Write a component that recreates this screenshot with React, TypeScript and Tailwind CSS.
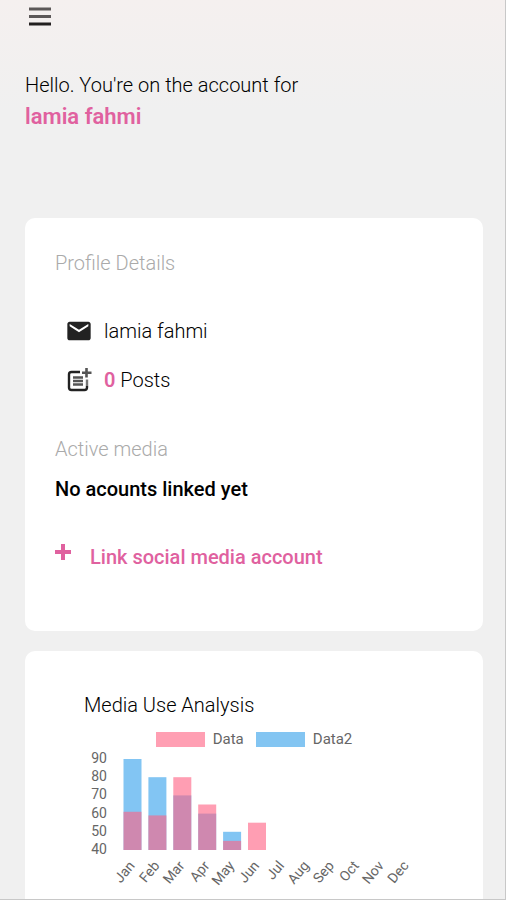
import { MdEmail } from "react-icons/md";

interface MonthPros {
    name: string;
    data: number;
    data2: number;
}

const months: MonthPros[] = [
    { name: "Jan", data: 61, data2: 90 },
    { name: "Feb", data: 59, data2: 80 },
    { name: "Mar", data: 80, data2: 70 },
    { name: "Apr", data: 65, data2: 60 },
    { name: "May", data: 45, data2: 50 },
    { name: "Jun", data: 55, data2: 40 },
    { name: "Jul", data: 40, data2: 40 },
    { name: "Aug", data: 40, data2: 40 },
    { name: "Sep", data: 40, data2: 40 },
    { name: "Oct", data: 40, data2: 40 },
    { name: "Nov", data: 40, data2: 40 },
    { name: "Dec", data: 40, data2: 40 },
];

const ticks = [90, 80, 70, 60, 50, 40];

// the value axis starts at 40
const barHeight = (value: number) => (value - 40) * 1.82;

function PostAddIcon() {
    return (
        <svg viewBox="0 0 26 26" className="w-[26px] h-[26px]" fill="none" aria-hidden="true">
            <path d="M14 5H5.5Q3 5 3 7.500V20.500Q3 23 5.500 23H18.500Q21 23 21 20.500V19" stroke="#222" strokeWidth="2.400" />
            <path d="M21 19V12.500" stroke="#777" strokeWidth="2.400" />
            <path d="M7 10.500H17M7 14H17M7 17.500H17" stroke="#555" strokeWidth="2.600" />
            <path d="M20.500 1V10.500M16 5.800H25.500" stroke="#555" strokeWidth="2.600" />
        </svg>
    );
}

function UsageChart() {
    return (
        <svg viewBox="0 0 340 150" className="block w-[340px] h-[150px]" role="img" aria-label="Media Use Analysis">
            {ticks.map((tick) => (
                <text key={tick} x="23" y={105 - barHeight(tick)} textAnchor="end" fontSize="14" fill="#666">{tick}</text>
            ))}
            {months.map((month, i) => (
                <g key={month.name} transform={`translate(${39.5 + i * 24.9} 0)`}>
                    <rect y={101 - barHeight(month.data2)} width="18" height={barHeight(month.data2)} fill="#36a2eb" fillOpacity="0.62" />
                    <rect y={101 - barHeight(month.data)} width="18" height={barHeight(month.data)} fill="#ff6384" fillOpacity="0.62" />
                    <text transform="translate(12 117) rotate(-50)" textAnchor="end" fontSize="14" fill="#666">{month.name}</text>
                </g>
            ))}
        </svg>
    );
}

export default function App() {
    return (
        <main className="h-screen overflow-hidden border-r border-b border-[#c8c8c8] bg-[#f0f0f0] bg-linear-to-b from-[#f5f0ef] to-[#f0f0f0] to-[110px] pl-[25px] pr-[22px] font-['Roboto',sans-serif] text-xl font-light text-black">
            <header className="h-[218px]">
                <button type="button" aria-label="Menu" className="block h-[32px] w-[30px]">
                    <svg viewBox="0 0 30 32" className="w-[30px] h-[32px]" strokeWidth="3" aria-hidden="true">
                        <path d="M4 9H26M4 16.500H26" stroke="#5c5858" />
                        <path d="M4 24H26" stroke="#221f1f" />
                    </svg>
                </button>
                <div className="pt-[37px] leading-[32px]">
                    <p>Hello. You're on the account for</p>
                    <p className="text-[22px] leading-[32px] font-semibold text-[#e0619f]">lamia fahmi</p>
                </div>
            </header>

            <section className="rounded-[10px] bg-white px-[30px] pt-[31px] pb-[60px]">
                <h2 className="text-[#aaa]">Profile Details</h2>
                <div className="flex items-center gap-[11px] pt-10 pl-[10px]">
                    <MdEmail className="h-[28px] w-[28px] text-[#222]" />
                    <p>lamia fahmi</p>
                </div>
                <div className="flex items-center gap-3 pt-[21px] pl-[11px]">
                    <PostAddIcon />
                    <p><span className="font-semibold text-[#e0619f]">0</span> Posts</p>
                </div>
                <h2 className="pt-[41px] text-[#aaa]">Active media</h2>
                <p className="pt-3 font-medium">No acounts linked yet</p>
                <button type="button" className="mt-[40px] flex items-start gap-[19px] font-medium text-[#e0619f]">
                    <svg viewBox="0 0 16 16" className="mt-px h-4 w-4" stroke="currentColor" strokeWidth="4" aria-hidden="true">
                        <path d="M8 0V16M0 8H16" />
                    </svg>
                    Link social media account
                </button>
            </section>

            <section className="mt-5 rounded-[10px] bg-white px-[59px] pt-10 pb-[60px] font-normal">
                <h2 className="font-light">Media Use Analysis</h2>
                <div className="flex w-[340px] items-center justify-center gap-3 pt-[10px] text-[15px] leading-5 text-[#666]">
                    <div className="flex items-center gap-2">
                        <span className="h-[15px] w-[49px] bg-[#ff9fb3]" />
                        Data
                    </div>
                    <div className="flex items-center gap-2">
                        <span className="h-[15px] w-[49px] bg-[#83c5f2]" />
                        Data2
                    </div>
                </div>
                <UsageChart />
            </section>
        </main>
    );
}
